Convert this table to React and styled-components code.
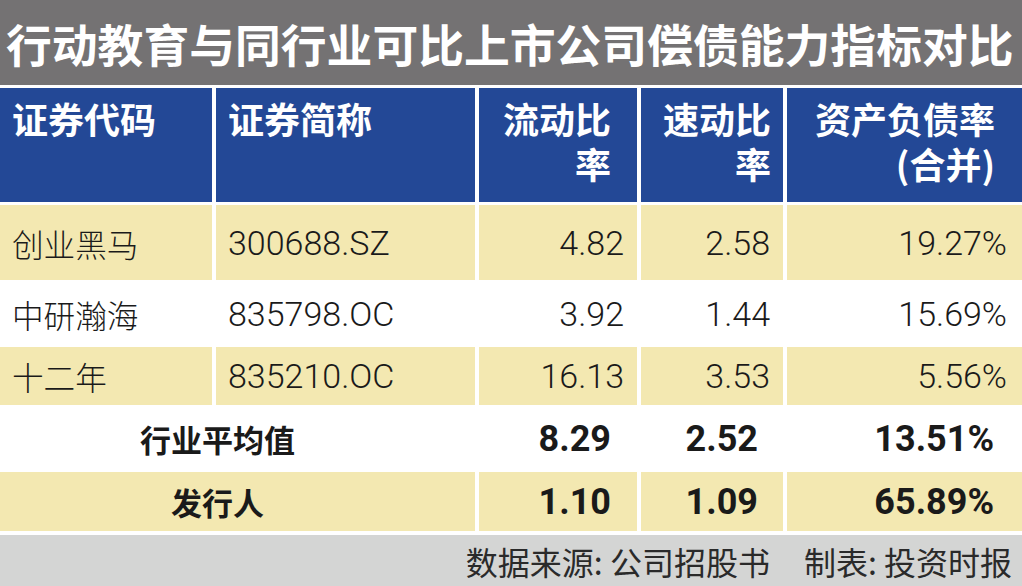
import { Fragment } from "react";
import styled, { createGlobalStyle } from "styled-components";

const GlobalStyle = createGlobalStyle`
  html, body {
    margin: 0;
    padding: 0;
    background: #ffffff;
  }
`;

const CJK = `"Noto Sans CJK SC", sans-serif`;
const NUM = `Roboto, "Liberation Sans", "Noto Sans CJK SC", sans-serif`;

const Page = styled.div`
  width: 1022px;
  height: 586px;
  display: flex;
  flex-direction: column;
  background: #ffffff;
  overflow: hidden;
`;

const Title = styled.h1`
  margin: 0;
  height: 85px;
  padding-left: 6px;
  display: flex;
  align-items: center;
  background: #747273;
  color: #ffffff;
  font-family: ${CJK};
  font-size: 45.8px;
  font-weight: 700;
  white-space: nowrap;
`;

const Table = styled.div`
  margin-top: 3px;
  display: grid;
  grid-template-columns: 212px 259px 158px 142px 235px;
  grid-template-rows: 114px 75px 61px 58px 61px 59px;
  column-gap: 4px;
  row-gap: 3px;
`;

const HeadCell = styled.div`
  background: #234896;
  color: #ffffff;
  font-family: ${CJK};
  font-size: 36px;
  font-weight: 700;
  line-height: 45px;
  padding: 8px ${(p) => p.$pr || 12}px 0 ${(p) => p.$pl || 12}px;
  text-align: ${(p) => p.$align || "left"};
`;

const Cell = styled.div`
  grid-column: ${(p) => (p.$span ? `span ${p.$span}` : "auto")};
  display: flex;
  align-items: center;
  justify-content: ${(p) =>
    p.$align === "right" ? "flex-end" : p.$align === "center" ? "center" : "flex-start"};
  padding: 0 ${(p) => p.$pr || 0}px 0 ${(p) => p.$pl || 0}px;
  background: ${(p) => (p.$shade ? "#f3e8b1" : "#ffffff")};
  color: #1a1a1a;
  font-family: ${(p) => (p.$cjk ? CJK : NUM)};
  font-size: ${(p) => p.$size}px;
  font-weight: ${(p) => (p.$bold ? 700 : 300)};
  white-space: nowrap;
`;

const Footer = styled.div`
  margin-top: 4px;
  flex: 1;
  display: flex;
  align-items: center;
  justify-content: flex-end;
  gap: 34px;
  padding-right: 10px;
  background: #d4d5d4;
  color: #2a2a2a;
  font-family: ${CJK};
  font-size: 32px;
  white-space: pre;
`;

const rows = [
  { name: "创业黑马", code: "300688.SZ", cur: "4.82", quick: "2.58", debt: "19.27%", shade: true },
  { name: "中研瀚海", code: "835798.OC", cur: "3.92", quick: "1.44", debt: "15.69%", shade: false },
  { name: "十二年", code: "835210.OC", cur: "16.13", quick: "3.53", debt: "5.56%", shade: true },
];

const totals = [
  { label: "行业平均值", cur: "8.29", quick: "2.52", debt: "13.51%", shade: false },
  { label: "发行人", cur: "1.10", quick: "1.09", debt: "65.89%", shade: true },
];

export default function App() {
  return (
    <Page>
      <GlobalStyle />
      <Title>行动教育与同行业可比上市公司偿债能力指标对比</Title>
      <Table>
        <HeadCell>证券代码</HeadCell>
        <HeadCell>证券简称</HeadCell>
        <HeadCell $align="right" $pr={26} $pl={24}>
          流动比率
        </HeadCell>
        <HeadCell $align="right" $pr={12} $pl={22}>
          速动比率
        </HeadCell>
        <HeadCell $align="right" $pr={27}>
          资产负债率
          <br />
          (合并)
        </HeadCell>

        {rows.map((r) => (
          <Fragment key={r.name}>
            <Cell $shade={r.shade} $cjk $size={31.6} $pl={12}>
              {r.name}
            </Cell>
            <Cell $shade={r.shade} $size={34} $pl={12}>
              {r.code}
            </Cell>
            <Cell $shade={r.shade} $size={34} $align="right" $pr={13}>
              {r.cur}
            </Cell>
            <Cell $shade={r.shade} $size={34} $align="right" $pr={13}>
              {r.quick}
            </Cell>
            <Cell $shade={r.shade} $size={34} $align="right" $pr={15}>
              {r.debt}
            </Cell>
          </Fragment>
        ))}

        {totals.map((t) => (
          <Fragment key={t.label}>
            <Cell $shade={t.shade} $span={2} $cjk $bold $size={31} $align="center" $pr={40}>
              {t.label}
            </Cell>
            <Cell $shade={t.shade} $bold $size={36} $align="right" $pr={26}>
              {t.cur}
            </Cell>
            <Cell $shade={t.shade} $bold $size={36} $align="right" $pr={25}>
              {t.quick}
            </Cell>
            <Cell $shade={t.shade} $bold $size={36} $align="right" $pr={28}>
              {t.debt}
            </Cell>
          </Fragment>
        ))}
      </Table>
      <Footer>
        <span>数据来源: 公司招股书</span>
        <span>制表: 投资时报</span>
      </Footer>
    </Page>
  );
}
